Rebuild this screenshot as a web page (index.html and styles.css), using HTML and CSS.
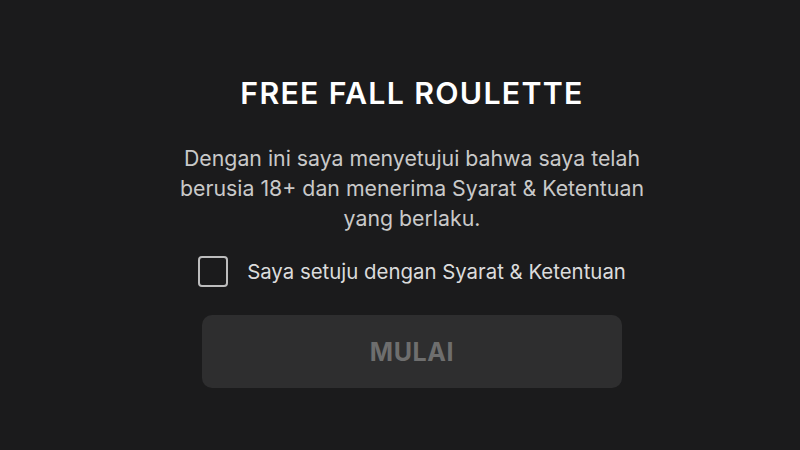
FILE: index.html
```html
<!DOCTYPE html>
<html lang="id">
<head>
<meta charset="utf-8">
<link rel="stylesheet" href="styles.css">
</head>
<body>
<main class="screen">
  <section class="panel">
    <h1 class="title">FREE FALL ROULETTE</h1>
    <p class="desc">Dengan ini saya menyetujui bahwa saya telah<br>berusia 18+ dan menerima Syarat &amp; Ketentuan<br>yang berlaku.</p>
    <label class="agree">
      <span class="box"></span>
      <span class="agree-text">Saya setuju dengan Syarat &amp; Ketentuan</span>
    </label>
    <button class="start" disabled>MULAI</button>
  </section>
</main>
</body>
</html>
```
FILE: styles.css
```css
html, body {
  margin: 0;
  padding: 0;
  background: #1b1b1c;
}
.screen {
  width: 800px;
  height: 450px;
  display: flex;
  justify-content: center;
  font-family: Inter, "Noto Sans", sans-serif;
  padding-left: 24px;
  box-sizing: border-box;
}
.panel {
  display: flex;
  flex-direction: column;
  align-items: center;
  padding-top: 75px;
}
.title {
  margin: 0;
  color: #ffffff;
  font-size: 30.3px;
  font-weight: 600;
  letter-spacing: 1.3px;
  line-height: 36px;
}
.desc {
  margin: 32px 0 0;
  color: #c9c9c9;
  font-size: 21.3px;
  line-height: 30px;
  text-align: center;
  white-space: nowrap;
}
.agree {
  margin-top: 23px;
  display: flex;
  align-items: center;
  gap: 19px;
}
.box {
  width: 26px;
  height: 27px;
  border: 2px solid #bdbdbd;
  border-radius: 4px;
}
.agree-text {
  color: #dcdcdc;
  font-size: 20.4px;
  line-height: 30px;
}
.start {
  margin-top: 28px;
  width: 420px;
  height: 73px;
  border: none;
  border-radius: 10px;
  background: #2e2e2f;
  color: #6e6e6e;
  font-family: Inter, "Noto Sans", sans-serif;
  font-size: 25px;
  font-weight: 700;
  letter-spacing: 0.6px;
}
```
